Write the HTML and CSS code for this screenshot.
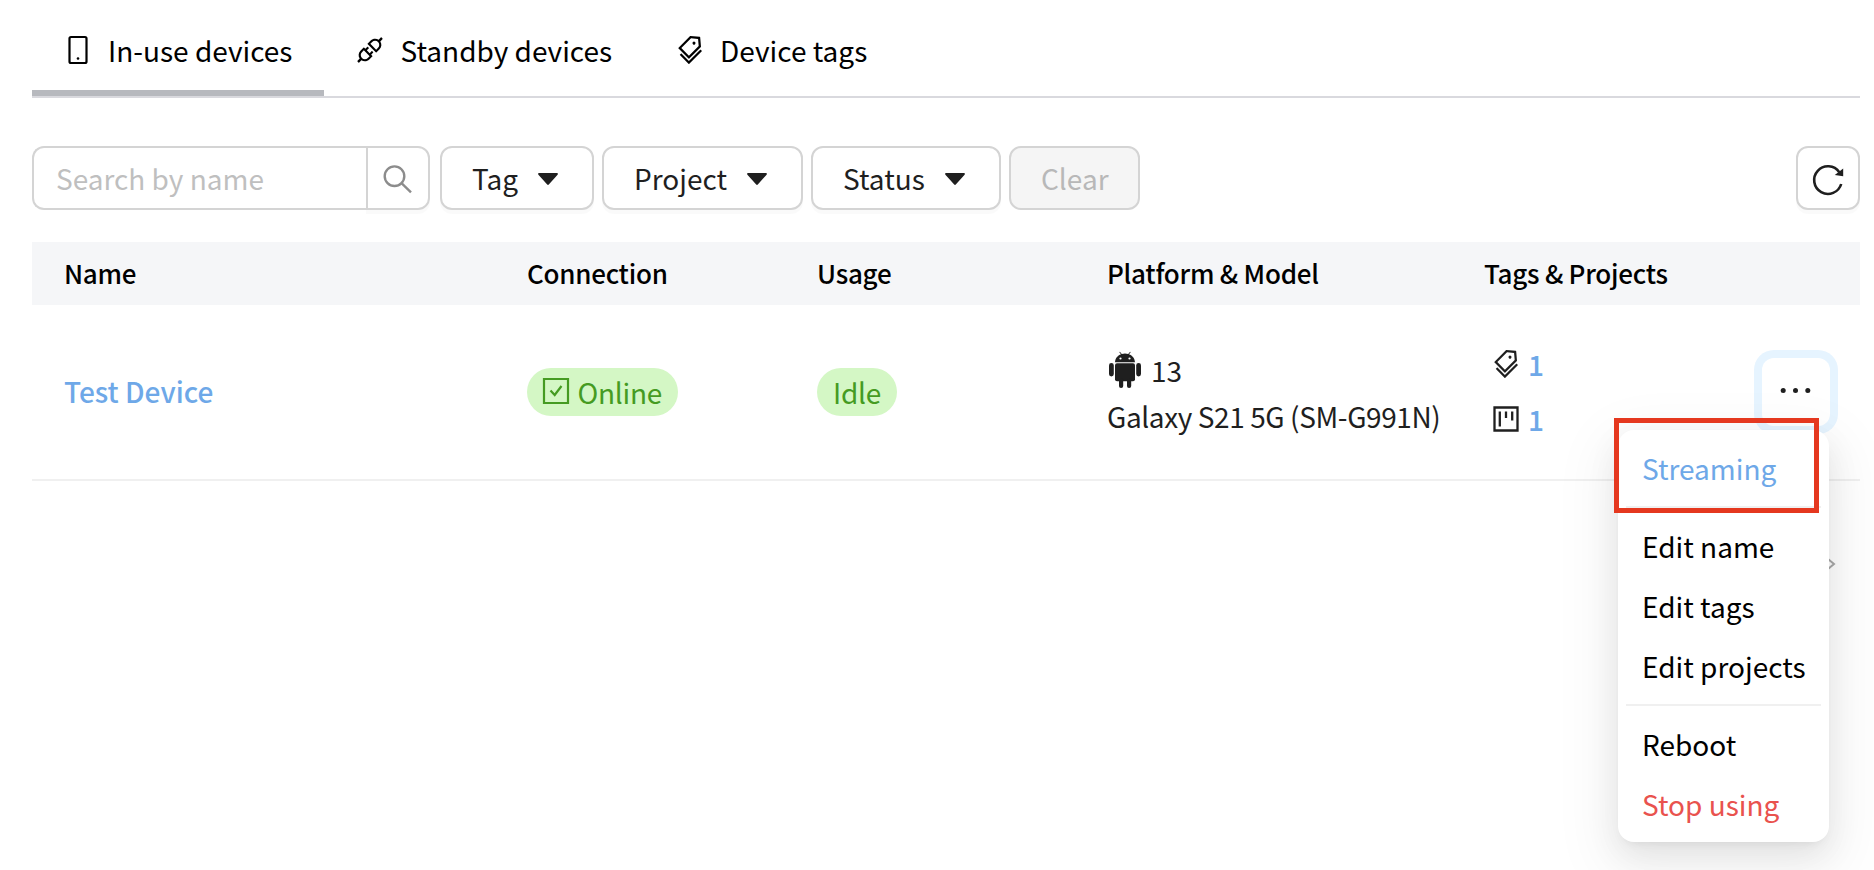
FILE: index.html
```html
<!DOCTYPE html>
<html lang="en">
<head>
<meta charset="utf-8">
<title>Devices</title>
<link rel="stylesheet" href="styles.css">
</head>
<body>
<svg class="defs" width="0" height="0">
  <symbol id="tags" viewBox="0 0 1024 1024"><path d="M483.2 790.3L861.4 412c1.7-1.7 2.5-4 2.3-6.3l-25.5-301.4c-.7-7.8-6.8-13.9-14.6-14.6L522.2 64.3c-2.3-.2-4.7.6-6.3 2.3L137.7 444.8a8.03 8.03 0 000 11.3l334.2 334.2c3.1 3.2 8.2 3.2 11.3 0zm62.6-651.7l224.6 19 19 224.6L477.5 694 233.9 450.5l311.9-311.9zm60.16 186.23a48 48 0 1067.88-67.89 48 48 0 10-67.88 67.89zM889.7 539.8l-39.6-39.5a8.03 8.03 0 00-11.3 0l-362 361.3-237.6-237a8.03 8.03 0 00-11.3 0l-39.6 39.5a8.03 8.03 0 000 11.3l243.2 242.8 39.6 39.5c3.1 3.1 8.2 3.1 11.3 0l407.3-406.6c3.1-3.1 3.1-8.2 0-11.3z"/></symbol>
  <symbol id="caret" viewBox="0 0 20 12"><path d="M1.2 0h17.6c1 0 1.4 1 .8 1.700l-8.800 9.800c-.4.5-1.200.5-1.600 0L.4 1.700C-.2 1 .2 0 1.200 0z"/></symbol>
</svg>
<div class="page">
  <nav class="tabs">
    <a class="tab active"><svg class="icon" viewBox="0 0 32 32"><rect x="7.500" y="3" width="17" height="26" rx="1.500" fill="none" stroke="currentColor" stroke-width="2.200"/><circle cx="16" cy="24.500" r="1.300"/></svg><span>In-use devices</span></a>
    <a class="tab"><svg class="icon" viewBox="0 0 1024 1024"><path d="M917.7 148.8l-42.4-42.4c-1.6-1.6-3.6-2.3-5.7-2.3s-4.1.8-5.7 2.3l-76.1 76.1a199.27 199.27 0 00-112.1-34.3c-51.2 0-102.4 19.5-141.5 58.6L432.3 308.7a8.03 8.03 0 000 11.3L704 591.7c1.6 1.6 3.6 2.3 5.7 2.3 2 0 4.1-.8 5.7-2.3l101.9-101.9c68.9-69 77-175.7 24.3-253.5l76.1-76.1c3.1-3.2 3.1-8.3 0-11.400zM769.1 441.700l-59.4 59.4-186.8-186.8 59.4-59.4c24.9-24.9 58.1-38.7 93.4-38.7 35.3 0 68.4 13.7 93.4 38.7 24.9 24.9 38.7 58.1 38.7 93.4 0 35.3-13.8 68.4-38.7 93.4zm-190.2 105a8.03 8.03 0 00-11.3 0L501 613.3 410.7 523l66.7-66.7c3.1-3.1 3.1-8.2 0-11.3L441 408.6a8.03 8.03 0 00-11.3 0L363 475.3l-43-43a7.85 7.85 0 00-5.7-2.3c-2 0-4.1.8-5.7 2.3L206.8 534.2c-68.9 69-77 175.7-24.3 253.5l-76.1 76.1a8.03 8.03 0 000 11.3l42.4 42.4c1.6 1.6 3.6 2.3 5.7 2.3s4.1-.8 5.7-2.3l76.1-76.1c33.7 22.9 72.9 34.3 112.1 34.3 51.2 0 102.4-19.5 141.5-58.6l101.9-101.9c3.1-3.1 3.1-8.2 0-11.3l-43-43 66.7-66.7c3.1-3.1 3.1-8.2 0-11.3l-36.6-36.2zM441.7 769.1a131.32 131.32 0 01-93.4 38.7c-35.3 0-68.4-13.7-93.4-38.7a131.32 131.32 0 01-38.7-93.4c0-35.3 13.7-68.4 38.7-93.4l59.4-59.4 186.8 186.8-59.4 59.4z"/></svg><span>Standby devices</span></a>
    <a class="tab"><svg class="icon"><use href="#tags"/></svg><span>Device tags</span></a>
  </nav>

  <div class="toolbar">
    <div class="search">
      <span class="placeholder">Search by name</span>
      <span class="search-btn"><svg class="line" width="32" height="32" viewBox="0 0 32 32" stroke="#8c8c8c" stroke-width="2.400"><circle cx="12.500" cy="13.200" r="9.800"/><path d="M19.500 20.200l9.500 9.200"/></svg></span>
    </div>
    <button class="btn tag">Tag<svg class="caret"><use href="#caret"/></svg></button>
    <button class="btn project">Project<svg class="caret"><use href="#caret"/></svg></button>
    <button class="btn status">Status<svg class="caret"><use href="#caret"/></svg></button>
    <button class="btn clear">Clear</button>
    <button class="btn refresh"><svg width="32" height="32" viewBox="0 0 32 32"><path d="M29.200 22A13.800 13.800 0 1 1 27.300 10.200" fill="none" stroke="currentColor" stroke-width="2.600"/><path d="M31.200 6.500v7.800l-8.400-1.300z"/></svg></button>
  </div>

  <div class="table">
    <div class="row head"><span>Name</span><span>Connection</span><span>Usage</span><span>Platform &amp; Model</span><span>Tags &amp; Projects</span><span></span></div>
    <div class="row body">
      <a class="link">Test Device</a>
      <div><span class="pill online"><svg class="line" width="26" height="26" viewBox="0 0 26 26" stroke="currentColor" stroke-width="2.200"><path d="M1 1h24v24H1z"/><path d="M7.500 12.500l4.200 4.500L18.500 8"/></svg>Online</span></div>
      <div><span class="pill">Idle</span></div>
      <div class="platform">
        <div class="os"><svg width="32" height="36" viewBox="0 0 32 36"><path d="M6 10.200C6.300 6 9 3.400 12 2.300L10.300.2l.6-.4 1.900 2.200q3.200-1 6.400 0L21.100-.2l.6.400L20 2.300c3 1.100 5.700 3.700 6 7.900z"/><rect x="6" y="11.200" width="20" height="18" rx="2"/><rect x="0" y="11" width="4.800" height="13.500" rx="2.400"/><rect x="27.200" y="11" width="4.800" height="13.500" rx="2.400"/><rect x="10" y="26" width="4.200" height="10" rx="2.100"/><rect x="18" y="26" width="4.200" height="10" rx="2.100"/><circle cx="11.500" cy="6.500" r="1.100" fill="#fff"/><circle cx="20.500" cy="6.500" r="1.100" fill="#fff"/></svg>13</div>
        <div class="model">Galaxy S21 5G (SM-G991N)</div>
      </div>
      <div class="counts">
        <div><svg class="icon"><use href="#tags"/></svg><a class="link">1</a></div>
        <div><svg class="icon" viewBox="0 0 32 32"><path d="M4.500 4.500h23v23h-23zM9.800 8.500v15M16 8.500v6.500M22.200 8.500v9" fill="none" stroke="currentColor" stroke-width="2.300"/></svg><a class="link">1</a></div>
      </div>
      <div class="more-cell"><button class="more"><svg width="32" height="32" viewBox="0 0 32 32"><circle cx="3.200" cy="14.600" r="2.500"/><circle cx="15.500" cy="14.600" r="2.500"/><circle cx="27.800" cy="14.600" r="2.500"/></svg></button></div>
    </div>
  </div>
  <div class="pager"><svg width="10" height="14" viewBox="0 0 10 14"><path d="M2 2l6 5-6 5" fill="none" stroke="#a8a8a8" stroke-width="2"/></svg></div>
</div>

<div class="menu">
  <a class="item blue">Streaming</a>
  <hr>
  <a class="item">Edit name</a>
  <a class="item">Edit tags</a>
  <a class="item">Edit projects</a>
  <hr>
  <a class="item">Reboot</a>
  <a class="item red">Stop using</a>
</div>
<div class="highlight"></div>
</body>
</html>
```

FILE: styles.css
```css
* { box-sizing: border-box; }
body {
  margin: 0;
  width: 1874px;
  height: 870px;
  position: relative;
  overflow: hidden;
  background: #fff;
  color: #1f1f1f;
  font: 28px/44px "Noto Sans CJK KR", sans-serif;
  white-space: nowrap;
}
svg { fill: currentColor; flex: none; display: block; overflow: visible; }
.line { fill: none; }
.defs { position: absolute; }
.icon { width: 32px; height: 32px; }
.page { padding: 0 14px 0 32px; }

.tabs { display: flex; height: 98px; border-bottom: 2px solid #d9d9de; color: #000; }
.tab { display: flex; gap: 14px; padding: 34px 32px 0 30px; height: 96px; }
.tab + .tab { gap: 14.500px; padding-right: 31.500px; }
.tab span { margin-top: -6px; }
.active { border-bottom: 6px solid #b7b9be; width: 292px; }

.toolbar { display: flex; margin-top: 48px; height: 64px; }
.search { display: flex; width: 398px; margin-right: 10px; }
.placeholder { width: 334px; padding: 8px 22px; color: #bfbfbf; border: 2px solid #d4d4d4; border-right: 0; border-radius: 12px 0 0 12px; }
.search-btn { width: 64px; border: 2px solid #d4d4d4; padding: 15px 0 0 14px; border-radius: 0 12px 12px 0; box-shadow: 0 4px 0 rgba(0,0,0,.02); }
.btn {
  display: flex; align-items: center; gap: 20px; height: 64px; margin: 0 8.500px 0 0; padding: 0 0 0 30px;
  border: 2px solid #d4d4d4; border-radius: 12px; background: #fff; color: #1f1f1f; font: inherit;
  box-shadow: 0 4px 0 rgba(0,0,0,.02);
}
.caret { width: 20px; height: 12px; margin-top: 2px; }
.tag { width: 153.500px; }
.project { width: 200.500px; }
.status { width: 189.500px; }
.clear { width: 130.500px; background: #f5f5f5; color: #b8b8b8; box-shadow: none; }
.refresh { width: 64px; margin: 0 0 0 auto; padding: 0; justify-content: center; }

.table { margin-top: 32px; }
.row { display: grid; grid-template-columns: 463px 290px 290px 377px 1fr 108px; padding-left: 32px; align-items: center; }
.head { height: 63px; padding-bottom: 2px; background: #f5f6f8; color: #000; font-size: 26px; font-weight: 500; letter-spacing: -.25px; }
.body { height: 176px; padding-bottom: 2px; border-bottom: 2px solid #f0f0f0; }
.link { color: #6ea8e8; font-weight: 500; }
.pill { display: inline-flex; align-items: center; height: 48px; padding: 0 15.500px 0 16px; border-radius: 24px; background: #d4f7c5; color: #459b22; letter-spacing: -.25px; vertical-align: middle; }
.online { gap: 8.500px; }
.online svg { margin-top: -2px; }
.platform { line-height: 48px; padding-top: 2px; }
.os { display: flex; align-items: center; gap: 10px; padding: 2px 0 0 2px; margin-bottom: -2px; }
.os svg { margin-top: -1px; }
.model { letter-spacing: -.4px; }
.counts { padding-left: 6px; }
.counts div { display: flex; align-items: center; gap: 6px; height: 55px; }
.more { width: 68px; height: 68px; padding: 0; border: 0; border-radius: 12px; background: #fff; color: #1f1f1f; box-shadow: 0 0 0 8px #e6f4ff; display: grid; place-items: center; }
.more-cell { padding: 2px 0 0 10px; }
.pager { display: flex; justify-content: flex-end; padding: 76px 24px 0 0; }

.menu {
  position: absolute; left: 1618px; top: 430px; width: 211px; height: 412px; padding: 8px;
  border-radius: 16px; background: #fff; color: #000;
  box-shadow: 0 12px 32px rgba(0,0,0,.08), 0 6px 12px -8px rgba(0,0,0,.12), 0 18px 56px 16px rgba(0,0,0,.05);
}
.item { display: block; height: 60px; padding: 6px 16px; line-height: 48px; }
.menu hr { height: 2px; margin: 8px 0; border: 0; background: #f0f0f0; }
.blue { color: #6ea8e8; }
.red { color: #e9524e; }
.highlight { position: absolute; left: 1614px; top: 418px; width: 205px; height: 95px; border: 5px solid #e5381f; }
```
